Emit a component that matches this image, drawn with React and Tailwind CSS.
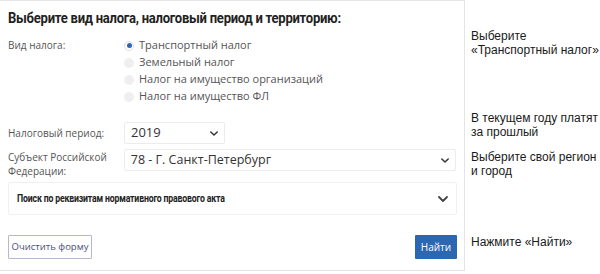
import React from 'react';

const Chevron = ({ className }) => (
  <svg viewBox="0 0 10 6" className={className} fill="none" stroke="currentColor" strokeWidth="1.8" strokeLinecap="round" strokeLinejoin="round">
    <path d="M1 1l4 4 4-4" />
  </svg>
);

const taxes = [
  'Транспортный налог',
  'Земельный налог',
  'Налог на имущество организаций',
  'Налог на имущество ФЛ',
];

const App = () => {
  return (
    <div className="w-[600px] h-[274px] bg-white flex overflow-hidden">
      {/* form panel */}
      <div className="w-[465px] h-[271px] border-r border-b border-t border-[#e4e4e4] px-2 shrink-0 font-['Open_Sans',sans-serif] text-[#444]">
        <h1 className="mt-[7px] h-[21px] text-[15px] leading-[21px] font-bold text-[#222] font-['Roboto',sans-serif] tracking-[-0.3px] whitespace-nowrap inline-block origin-left scale-x-[0.87]">
          Выберите вид налога, налоговый период и территорию:
        </h1>

        <div className="mt-[8px] flex">
          <div className="w-[116px] text-[10px] leading-[17px] text-[#555]">Вид налога:</div>
          <div className="flex flex-col">
            {taxes.map((t, i) => (
              <div key={t} className="h-[17px] flex items-center">
                {i === 0 ? (
                  <span className="w-[10px] h-[10px] rounded-full bg-white border border-[#dcdcdc] flex items-center justify-center">
                    <span className="w-[5px] h-[5px] rounded-full bg-[#2b65b3]" />
                  </span>
                ) : (
                  <span className="w-[10px] h-[10px] rounded-full bg-[#efefef]" />
                )}
                <span className="ml-[5px] text-[11px] text-[#555]">{t}</span>
              </div>
            ))}
          </div>
        </div>

        <div className="mt-[17px] flex items-center">
          <div className="w-[116px] text-[10px] leading-[14px] text-[#555]">Налоговый период:</div>
          <div className="w-[101px] h-[22px] border border-[#ececec] rounded-[2px] flex items-center justify-between pl-[6px] pr-[6px] text-[13px] text-[#333]">
            <span>2019</span>
            <Chevron className="w-[8px] h-[5px] text-[#333]" />
          </div>
        </div>

        <div className="mt-[5px] flex">
          <div className="w-[116px] text-[10px] leading-[14px] text-[#555] pt-[1px]">
            Субъект Российской<br />Федерации:
          </div>
          <div className="w-[333px] h-[22px] border border-[#ececec] rounded-[2px] flex items-center justify-between pl-[6px] pr-[6px] text-[12.5px] text-[#333]">
            <span>78 - Г. Санкт-Петербург</span>
            <Chevron className="w-[8px] h-[5px] text-[#333]" />
          </div>
        </div>

        <div className="mt-[4px] h-[33px] w-[449px] border border-[#f0f0f0] rounded-[2px] flex items-center justify-between pl-[8px] pr-[8px]">
          <span className="text-[10.5px] font-bold text-[#222] font-['Roboto',sans-serif] tracking-[-0.2px] whitespace-nowrap inline-block origin-left scale-x-[0.83]">
            Поиск по реквизитам нормативного правового акта
          </span>
          <Chevron className="w-[10px] h-[6px] text-[#444]" />
        </div>

        <div className="mt-[20px] w-[449px] flex justify-between">
          <button className="h-[24px] w-[84px] border border-[#b5b6d4] rounded-[1px] bg-white text-[9.5px] text-[#4a4f7a]">
            Очистить форму
          </button>
          <button className="h-[24px] w-[42px] bg-[#2c67b2] rounded-[1px] text-[10px] font-medium text-white">
            Найти
          </button>
        </div>
      </div>

      {/* annotations */}
      <div className="pl-[6px] pt-[29px] text-[12px] leading-[14px] text-[#1a1a1a] font-['Liberation_Sans',Arial,sans-serif]">
        <p>Выберите<br />«Транспортный налог»</p>
        <p className="mt-[54px]">В текущем году платят<br />за прошлый</p>
        <p className="mt-[11px]">Выберите свой регион<br />и город</p>
        <p className="mt-[57px]">Нажмите «Найти»</p>
      </div>
    </div>
  );
};

export default App;
